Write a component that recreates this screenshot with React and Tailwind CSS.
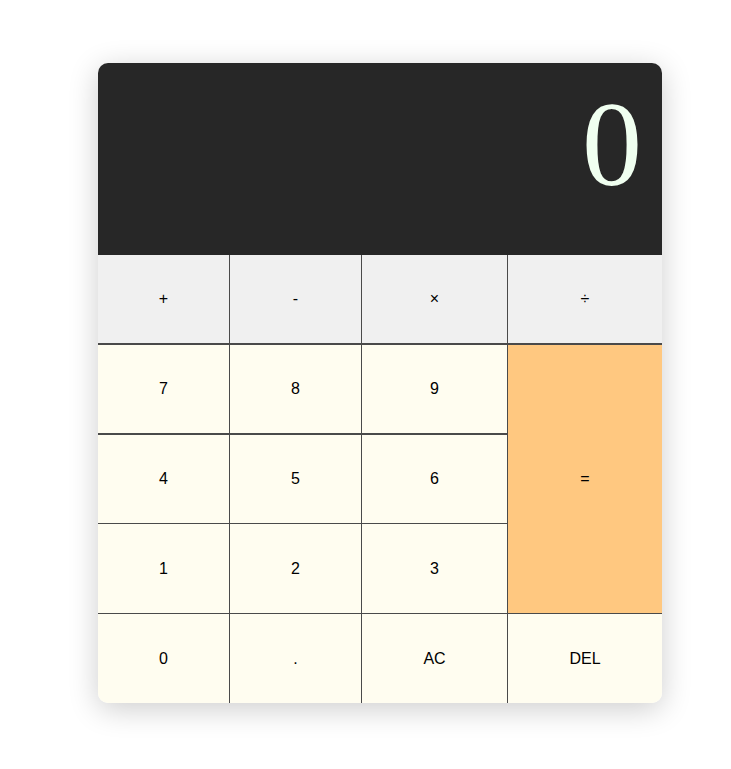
export default function App() {
  const cell =
    "flex items-center justify-center text-[16px] text-black border-[#4a4a4a]";
  const ops = ["+", "-", "×", "÷"];
  return (
    <div
      className="min-h-[769px] bg-white pt-[63px] pl-[98px]"
      style={{ fontFamily: '"Liberation Sans", Arial, sans-serif' }}
    >
      <div className="w-[564px] rounded-[10px] overflow-hidden shadow-[0_6px_30px_rgba(0,0,0,0.2)]">
        <div className="h-[192px] bg-[#272727] flex justify-end items-start pt-[22px] pr-5">
          <span
            className="text-[120px] leading-none text-[#f0fff0]"
            style={{ fontFamily: '"Liberation Serif", "Times New Roman", serif' }}
          >
            0
          </span>
        </div>
        <div className="grid grid-cols-[132px_132px_146px_154px] grid-rows-[90px_90px_89px_90px_89px]">
          {ops.map((op, i) => (
            <button
              key={op}
              className={`${cell} bg-[#f0f0f0] border-b-2 ${i < 3 ? "border-r" : ""}`}
            >
              {op}
            </button>
          ))}
          <button className={`${cell} bg-[#fffdf0] border-r border-b-2`}>7</button>
          <button className={`${cell} bg-[#fffdf0] border-r border-b-2`}>8</button>
          <button className={`${cell} bg-[#fffdf0] border-r border-b-2`}>9</button>
          <button className={`${cell} bg-[#ffc880] row-span-3 border-b`}>=</button>
          <button className={`${cell} bg-[#fffdf0] border-r border-b`}>4</button>
          <button className={`${cell} bg-[#fffdf0] border-r border-b`}>5</button>
          <button className={`${cell} bg-[#fffdf0] border-r border-b`}>6</button>
          <button className={`${cell} bg-[#fffdf0] border-r border-b`}>1</button>
          <button className={`${cell} bg-[#fffdf0] border-r border-b`}>2</button>
          <button className={`${cell} bg-[#fffdf0] border-r border-b`}>3</button>
          <button className={`${cell} bg-[#fffdf0] border-r`}>0</button>
          <button className={`${cell} bg-[#fffdf0] border-r`}>.</button>
          <button className={`${cell} bg-[#fffdf0] border-r`}>AC</button>
          <button className={`${cell} bg-[#fffdf0]`}>DEL</button>
        </div>
      </div>
    </div>
  );
}
